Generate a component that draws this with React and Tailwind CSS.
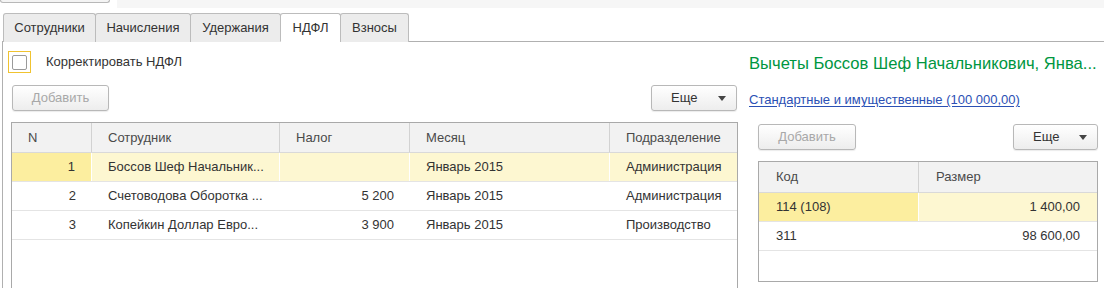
import React from "react";

const font = { fontFamily: '"Liberation Sans", Arial, sans-serif' };

function Btn({ children, disabled, w, more }) {
  return (
    <div
      className={`h-[26px] ${w} flex items-center justify-center rounded-[3px] border border-[#b8b8b8] bg-gradient-to-b from-white to-[#ededed] shadow-[0_1px_1px_rgba(0,0,0,0.08)] ${disabled ? "text-[#a8a8a8]" : "text-[#333333]"}`}
    >
      {more ? (
        <div className="flex items-center w-full pl-[19px] pr-[10px]">
          <span className="flex-1">Еще</span>
          <svg width="8" height="5" viewBox="0 0 8 5">
            <path d="M0 0 H8 L4 5 Z" fill="#444" />
          </svg>
        </div>
      ) : (
        children
      )}
    </div>
  );
}

const tabs = [
  { t: "Сотрудники", w: "w-[93px]" },
  { t: "Начисления", w: "w-[96px]" },
  { t: "Удержания", w: "w-[91px]" },
  { t: "НДФЛ", w: "w-[61px]", active: true },
  { t: "Взносы", w: "w-[69px]" },
];

const rows = [
  { n: "1", name: "Боссов Шеф Начальник...", tax: "", month: "Январь 2015", dep: "Администрация", sel: true },
  { n: "2", name: "Счетоводова Оборотка ...", tax: "5 200", month: "Январь 2015", dep: "Администрация" },
  { n: "3", name: "Копейкин Доллар Евро...", tax: "3 900", month: "Январь 2015", dep: "Производство" },
];

export default function App() {
  return (
    <div className="w-[1104px] h-[288px] overflow-hidden bg-white text-[13px] text-[#333333] leading-[16px]" style={font}>
      {/* top strip */}
      <div className="flex h-[13px]">
        <div className="w-[110px] h-[3px] border border-t-0 border-[#b8b8b8] rounded-b-[3px] bg-[#f4f4f4]" />
        <div className="ml-[7px] flex-1 h-[8px] bg-[#f6f6f6]" />
      </div>

      {/* tabs */}
      <div className="flex pl-[3px] h-[28px] relative z-10">
        {tabs.map((tab, i) => (
          <div
            key={tab.t}
            className={`${tab.w} ${i > 0 ? "-ml-px" : ""} h-[29px] flex items-center justify-center border border-[#bcbcbc] rounded-t-[3px] ${tab.active ? "bg-white border-b-white" : "bg-[#ececec] border-b-0 h-[28px]"} text-[#333333]`}
          >
            {tab.t}
          </div>
        ))}
      </div>

      {/* panel */}
      <div className="ml-[2px] border-l border-t border-[#b0b0b0] flex h-[260px]">
        {/* left */}
        <div className="w-[744px] pl-[5px] pt-[9px] flex flex-col">
          <div className="flex items-center h-[22px]">
            <div className="w-[23px] h-[22px] border border-[#f0c330] flex items-center justify-center">
              <div className="w-[15px] h-[15px] border border-[#9a9a9a] rounded-[2px] bg-white" />
            </div>
            <span className="ml-[15px]">Корректировать НДФЛ</span>
          </div>
          <div className="flex items-center justify-between mt-[12px] pl-[4px] w-[729px]">
            <Btn disabled w="w-[97px]">Добавить</Btn>
            <Btn more w="w-[86px]" />
          </div>
          <div className="mt-[11px] ml-[3px] w-[727px] h-[200px] border border-[#a9a9a9] border-b-0">
            <div className="flex h-[30px] bg-[#f2f2f2] border-b border-[#d9d9d9] text-[#4a4a4a]">
              <div className="w-[80px] pl-[16px] flex items-center border-r border-[#d2d2d2]">N</div>
              <div className="w-[188px] pl-[16px] flex items-center border-r border-[#d2d2d2]">Сотрудник</div>
              <div className="w-[130px] pl-[16px] flex items-center border-r border-[#d2d2d2]">Налог</div>
              <div className="w-[200px] pl-[16px] flex items-center border-r border-[#d2d2d2]">Месяц</div>
              <div className="flex-1 pl-[16px] flex items-center">Подразделение</div>
            </div>
            {rows.map((r) => (
              <div
                key={r.n}
                className={`flex h-[29px] border-b border-[#e4e4e4] ${r.sel ? "bg-[#fdf7d1]" : "bg-white"}`}
              >
                <div className={`w-[80px] pr-[16px] flex items-center justify-end ${r.sel ? "bg-[#fcee9f] border-r border-white" : ""}`}>{r.n}</div>
                <div className={`w-[188px] pl-[16px] flex items-center ${r.sel ? "border-r border-white" : ""}`}>{r.name}</div>
                <div className={`w-[130px] pr-[16px] flex items-center justify-end ${r.sel ? "border-r border-white" : ""}`}>{r.tax}</div>
                <div className={`w-[200px] pl-[16px] flex items-center ${r.sel ? "border-r border-white" : ""}`}>{r.month}</div>
                <div className="flex-1 pl-[16px] flex items-center">{r.dep}</div>
              </div>
            ))}
          </div>
        </div>

        {/* right */}
        <div className="flex-1 pl-[2px] pt-[12px] flex flex-col">
          <div className="text-[16.6px] leading-[20px] text-[#00963f] whitespace-nowrap">
            Вычеты Боссов Шеф Начальникович, Янва...
          </div>
          <div className="mt-[18px] leading-[16px]">
            <span className="text-[#2b50b4] underline underline-offset-2">Стандартные и имущественные (100 000,00)</span>
          </div>
          <div className="flex items-center justify-between mt-[16px] ml-[9px] w-[340px]">
            <Btn disabled w="w-[98px]">Добавить</Btn>
            <Btn more w="w-[85px]" />
          </div>
          <div className="mt-[11px] ml-[9px] w-[340px] h-[121px] border border-[#a9a9a9]">
            <div className="flex h-[31px] bg-[#f2f2f2] border-b border-[#d9d9d9] text-[#4a4a4a]">
              <div className="w-[160px] pl-[17px] flex items-center border-r border-[#d2d2d2]">Код</div>
              <div className="flex-1 pl-[17px] flex items-center">Размер</div>
            </div>
            <div className="flex h-[29px] border-b border-[#e4e4e4] bg-[#fdf7d1]">
              <div className="w-[160px] pl-[17px] flex items-center bg-[#fcee9f] border-r border-white">114 (108)</div>
              <div className="flex-1 pr-[17px] flex items-center justify-end">1 400,00</div>
            </div>
            <div className="flex h-[29px] border-b border-[#e4e4e4]">
              <div className="w-[160px] pl-[17px] flex items-center">311</div>
              <div className="flex-1 pr-[17px] flex items-center justify-end">98 600,00</div>
            </div>
          </div>
        </div>
      </div>
    </div>
  );
}
